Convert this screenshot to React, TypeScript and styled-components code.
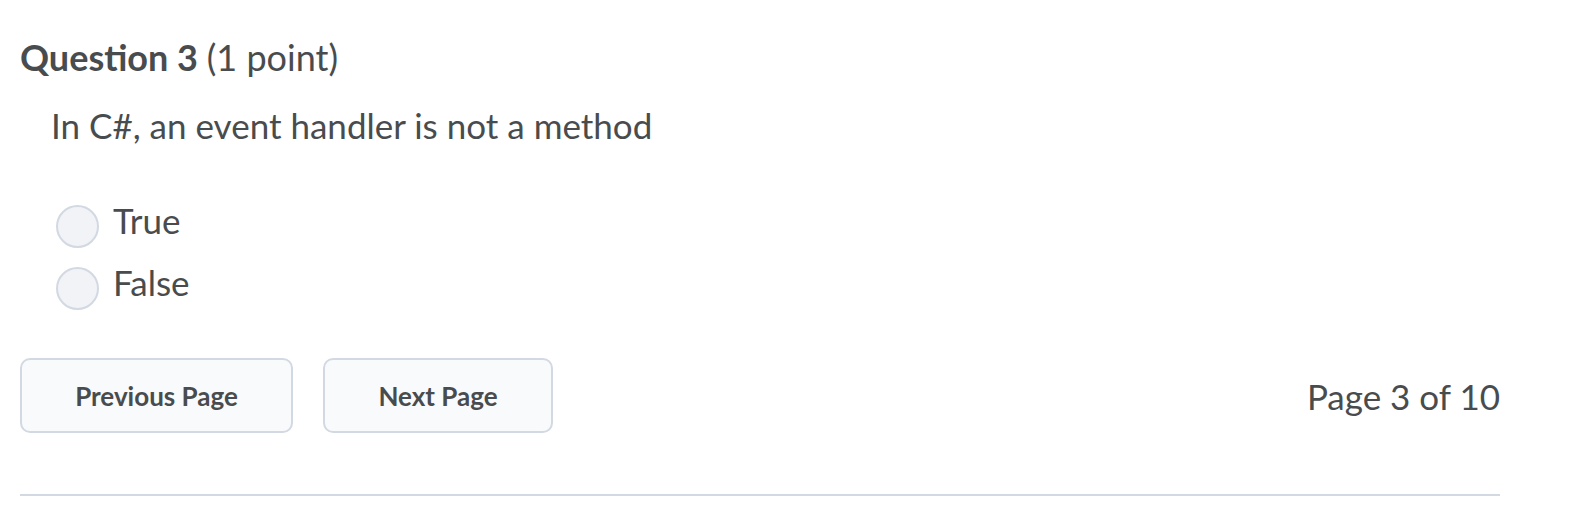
import styled, { createGlobalStyle } from "styled-components";

const GlobalStyle = createGlobalStyle`
  body {
    margin: 0;
    background: #ffffff;
    font-family: Lato, "Open Sans", "Liberation Sans", sans-serif;
    color: #494c4e;
  }
`;

const Page = styled.div`
  width: 1480px;
  padding: 35px 0 0 20px;
`;

const Title = styled.h2`
  margin: 0;
  font-size: 36px;
  line-height: 44px;
  font-weight: 700;

  span {
    font-weight: 400;
  }
`;

const Prompt = styled.p`
  margin: 25px 0 0 31px;
  font-size: 35px;
  line-height: 42px;
`;

const Options = styled.div`
  display: flex;
  flex-direction: column;
  gap: 16px;
  margin: 56px 0 0 36px;
`;

const Option = styled.label`
  display: flex;
  align-items: flex-start;
  gap: 14px;
  font-size: 35px;
  line-height: 36px;
`;

const Radio = styled.span`
  box-sizing: border-box;
  width: 43px;
  height: 43px;
  margin-top: 3px;
  border-radius: 50%;
  border: 2px solid #d3d9e3;
  background: #f1f3f6;
  flex-shrink: 0;
`;

const Footer = styled.div`
  display: flex;
  align-items: center;
  margin-top: 48px;
`;

const Button = styled.button<{ $w: number }>`
  box-sizing: border-box;
  width: ${(p) => p.$w}px;
  height: 75px;
  margin-right: 30px;
  border: 2px solid #d3d9e3;
  border-radius: 10px;
  background: #f9fafb;
  color: #494c4e;
  font-family: Lato, "Open Sans", "Liberation Sans", sans-serif;
  font-size: 26px;
  font-weight: 700;
`;

const Count = styled.div`
  margin-left: auto;
  font-size: 35px;
  line-height: 42px;
`;

const Rule = styled.hr`
  margin: 61px 0 0;
  border: none;
  height: 2px;
  background: #d3d9e3;
`;

export default function App() {
  return (
    <>
      <GlobalStyle />
      <Page>
        <Title>
          Question 3 <span>(1 point)</span>
        </Title>
        <Prompt>In C#, an event handler is not a method</Prompt>
        <Options>
          <Option>
            <Radio />
            True
          </Option>
          <Option>
            <Radio />
            False
          </Option>
        </Options>
        <Footer>
          <Button $w={273}>Previous Page</Button>
          <Button $w={230}>Next Page</Button>
          <Count>Page 3 of 10</Count>
        </Footer>
        <Rule />
      </Page>
    </>
  );
}
